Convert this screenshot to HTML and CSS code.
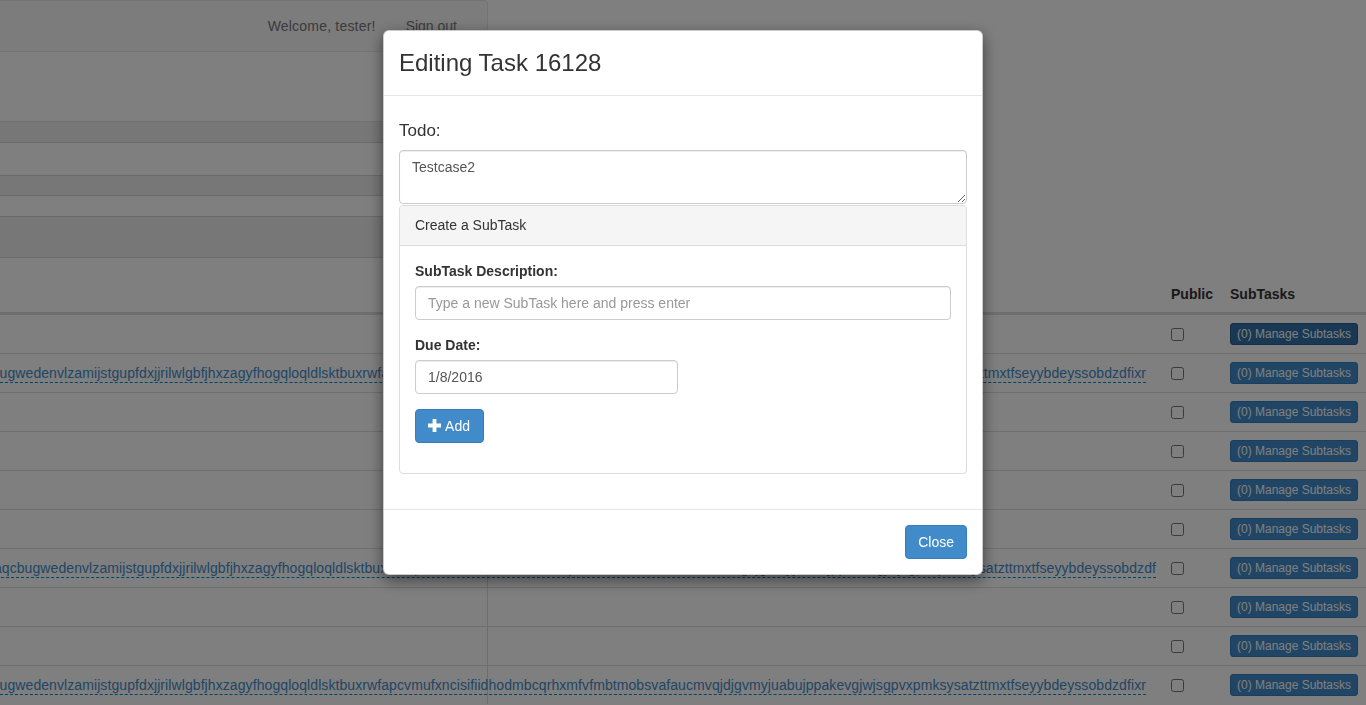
FILE: index.html
```html
<!DOCTYPE html>
<html lang="en">
<head>
<meta charset="utf-8">
<title>Editing Task 16128</title>
<link rel="stylesheet" href="styles.css">
</head>
<body>
<div class="page">
  <div class="top">
    <nav class="navbar">
      <span class="navbar-text">Welcome, tester!</span>
      <a class="navbar-link" href="#">Sign out</a>
    </nav>
    <div class="side-list">
      <div class="side-spacer"></div>
      <div class="side-row shade light-top h20"></div>
      <div class="side-row h32"></div>
      <div class="side-row shade h19"></div>
      <div class="side-row h20"></div>
      <div class="side-row shade h40"></div>
      <div class="side-row h18"></div>
    </div>
  </div>

  <div class="task-table">
    <div class="thead">
      <div class="th"></div>
      <div class="th">Public</div>
      <div class="th">SubTasks</div>
    </div>
    <div class="task-row">
      <div class="todo-cell"></div>
      <div class="check-cell"><input type="checkbox"></div>
      <div class="btn-cell"><button class="btn-xs btn-xs-active">(0) Manage Subtasks</button></div>
    </div>
    <div class="task-row">
      <div class="todo-cell"><a class="editable" href="#">xqcbugwedenvlzamijstgupfdxjjrilwlgbfjhxzagyfhogqloqldlsktbuxrwfapcvmufxncisifiidhodmbcqrhxmfvfmbtmobsvafaucmvqjdjgvmyjuabujppakevgjwjsgpvxpmksysatzttmxtfseyybdeyssobdzdfixr</a></div>
      <div class="check-cell"><input type="checkbox"></div>
      <div class="btn-cell"><button class="btn-xs">(0) Manage Subtasks</button></div>
    </div>
    <div class="task-row">
      <div class="todo-cell"></div>
      <div class="check-cell"><input type="checkbox"></div>
      <div class="btn-cell"><button class="btn-xs">(0) Manage Subtasks</button></div>
    </div>
    <div class="task-row">
      <div class="todo-cell"></div>
      <div class="check-cell"><input type="checkbox"></div>
      <div class="btn-cell"><button class="btn-xs">(0) Manage Subtasks</button></div>
    </div>
    <div class="task-row">
      <div class="todo-cell"></div>
      <div class="check-cell"><input type="checkbox"></div>
      <div class="btn-cell"><button class="btn-xs">(0) Manage Subtasks</button></div>
    </div>
    <div class="task-row">
      <div class="todo-cell"></div>
      <div class="check-cell"><input type="checkbox"></div>
      <div class="btn-cell"><button class="btn-xs">(0) Manage Subtasks</button></div>
    </div>
    <div class="task-row">
      <div class="todo-cell todo-cell-wide"><a class="editable" href="#">xvtaqcbugwedenvlzamijstgupfdxjjrilwlgbfjhxzagyfhogqloqldlsktbuxrwfapcvmufxncisifiidhodmbcqrhxmfvfmbtmobsvafaucmvqjdjgvmyjuabujppakevgjwjsgpvxpmksysatzttmxtfseyybdeyssobdzdf</a></div>
      <div class="check-cell"><input type="checkbox"></div>
      <div class="btn-cell"><button class="btn-xs">(0) Manage Subtasks</button></div>
    </div>
    <div class="task-row">
      <div class="todo-cell"></div>
      <div class="check-cell"><input type="checkbox"></div>
      <div class="btn-cell"><button class="btn-xs">(0) Manage Subtasks</button></div>
    </div>
    <div class="task-row">
      <div class="todo-cell"></div>
      <div class="check-cell"><input type="checkbox"></div>
      <div class="btn-cell"><button class="btn-xs">(0) Manage Subtasks</button></div>
    </div>
    <div class="task-row">
      <div class="todo-cell"><a class="editable" href="#">xqcbugwedenvlzamijstgupfdxjjrilwlgbfjhxzagyfhogqloqldlsktbuxrwfapcvmufxncisifiidhodmbcqrhxmfvfmbtmobsvafaucmvqjdjgvmyjuabujppakevgjwjsgpvxpmksysatzttmxtfseyybdeyssobdzdfixr</a></div>
      <div class="check-cell"><input type="checkbox"></div>
      <div class="btn-cell"><button class="btn-xs">(0) Manage Subtasks</button></div>
    </div>
  </div>
</div>

<div class="modal-backdrop"></div>

<div class="modal">
  <div class="modal-dialog">
    <div class="modal-content">
      <div class="modal-header">
        <h3 class="modal-title">Editing Task 16128</h3>
      </div>
      <div class="modal-body">
        <label class="todo-label">Todo:</label>
        <textarea class="form-control todo-input" rows="2">Testcase2</textarea>
        <div class="panel">
          <div class="panel-heading">Create a SubTask</div>
          <div class="panel-body">
            <div class="form-group">
              <label class="control-label">SubTask Description:</label>
              <input class="form-control" type="text" placeholder="Type a new SubTask here and press enter">
            </div>
            <div class="form-group">
              <label class="control-label">Due Date:</label>
              <input class="form-control date-input" type="text" value="1/8/2016">
            </div>
            <div class="form-group">
              <button class="btn btn-primary btn-add"><svg class="plus-icon" width="13" height="13" viewBox="0 0 13 13" aria-hidden="true"><path d="M4.6 0h3.8v4.6H13v3.8H8.4V13H4.6V8.4H0V4.6h4.6z" fill="#fff"/></svg> Add</button>
            </div>
          </div>
        </div>
      </div>
      <div class="modal-footer">
        <button class="btn btn-primary">Close</button>
      </div>
    </div>
  </div>
</div>
</body>
</html>
```

FILE: styles.css
```css
* {
  box-sizing: border-box;
}

html, body {
  margin: 0;
  padding: 0;
  overflow: hidden;
  height: 100%;
}

body {
  font-family: "Liberation Sans", Arial, Helvetica, sans-serif;
  font-size: 14px;
  line-height: 1.428571;
  color: #333;
  background: #fff;
}

a {
  color: #428bca;
  text-decoration: none;
}

/* ---------- background page ---------- */

.top {
  width: 488px;
}

.navbar {
  height: 52px;
  display: flex;
  justify-content: flex-end;
  align-items: center;
  padding-top: 1px;
  background: #f8f8f8;
  border: 1px solid #e7e7e7;
  border-left: 0;
  border-radius: 0 4px 4px 0;
  padding-right: 15px;
}

.navbar-text {
  color: #777;
  margin-right: 15px;
  letter-spacing: 0.2px;
}

.navbar-link {
  color: #777;
  padding: 0 15px;
}

.side-spacer {
  height: 69px;
}

.side-row {
  border-top: 1px solid #d4d4d4;
}

.side-row.light-top {
  border-top-color: #e4e4e4;
}

.shade {
  background: #eee;
}

.h18 { height: 19px; }
.h19 { height: 20px; }
.h20 { height: 21px; }
.h32 { height: 33px; }
.h40 { height: 41px; }

.task-table {
  width: 100%;
}

.thead {
  display: grid;
  grid-template-columns: minmax(0, 1fr) 59px 144px;
  height: 38px;
  border-bottom: 2px solid #ddd;
}

.th {
  padding: 8px;
  font-weight: bold;
  line-height: 20px;
  white-space: nowrap;
}

.task-row {
  display: grid;
  grid-template-columns: minmax(0, 1fr) 59px 144px;
  height: 39px;
  border-top: 1px solid #ddd;
  background-image: linear-gradient(#ddd, #ddd);
  background-repeat: no-repeat;
  background-size: 1px 100%;
  background-position: 487px 0;
}

.todo-cell {
  display: flex;
  justify-content: flex-end;
  align-items: center;
  overflow: hidden;
  white-space: nowrap;
  padding: 0 17px 0 0;
}

.todo-cell-wide {
  padding-right: 7px;
}

.editable {
  flex-shrink: 0;
  line-height: 18px;
  letter-spacing: 0.085px;
  color: #428bca;
  border-bottom: 1px dashed #0088cc;
}

.check-cell {
  padding: 0 8px;
  display: flex;
  align-items: center;
}

.check-cell input {
  margin: 0;
  width: 13px;
  height: 13px;
}

.btn-cell {
  padding: 8px;
}

.btn-xs {
  display: block;
  width: 128px;
  height: 22px;
  padding: 1px 5px;
  font-family: "Liberation Sans", Arial, sans-serif;
  font-size: 12px;
  line-height: 18px;
  color: #fff;
  background: #428bca;
  border: 1px solid #357ebd;
  border-radius: 3px;
  white-space: nowrap;
}

.btn-xs-active {
  background: #3071a9;
  border-color: #285e8e;
}

/* ---------- modal ---------- */

.modal-backdrop {
  position: fixed;
  inset: 0;
  background: rgba(0, 0, 0, 0.5);
  z-index: 1040;
}

.modal {
  position: fixed;
  inset: 0;
  z-index: 1050;
  overflow: hidden;
}

.modal-dialog {
  width: 600px;
  margin: 30px auto;
}

.modal-content {
  background: #fff;
  border: 1px solid rgba(0, 0, 0, 0.2);
  border-radius: 6px;
  box-shadow: 0 5px 15px rgba(0, 0, 0, 0.5);
}

.modal-header {
  padding: 15px;
  border-bottom: 1px solid #e5e5e5;
}

.modal-title {
  margin: 0;
  font-size: 24px;
  font-weight: 500;
  line-height: 34px;
  color: #333;
}

.modal-body {
  padding: 15px;
}

.todo-label {
  display: block;
  margin: 10px 0 9px;
  font-size: 17px;
  line-height: 20px;
}

.form-control {
  display: block;
  width: 100%;
  height: 34px;
  padding: 6px 12px;
  font-family: "Liberation Sans", Arial, sans-serif;
  font-size: 14px;
  line-height: 20px;
  color: #555;
  background: #fff;
  border: 1px solid #ccc;
  border-radius: 4px;
  box-shadow: inset 0 1px 1px rgba(0, 0, 0, 0.075);
  outline: none;
}

.form-control::placeholder {
  color: #999;
}

.todo-input {
  height: 54px;
  resize: vertical;
}

.date-input {
  width: 263px;
}

.panel {
  margin-top: 1px;
  margin-bottom: 20px;
  border: 1px solid #ddd;
  border-radius: 4px;
  background: #fff;
}

.panel-heading {
  padding: 10px 15px;
  line-height: 19px;
  background: #f5f5f5;
  border-bottom: 1px solid #ddd;
  border-radius: 3px 3px 0 0;
  color: #333;
}

.panel-body {
  padding: 15px;
}

.form-group {
  margin-bottom: 15px;
}

.control-label {
  display: block;
  margin-bottom: 5px;
  font-weight: bold;
  line-height: 20px;
}

.btn {
  display: inline-block;
  height: 34px;
  padding: 6px 12px;
  font-family: "Liberation Sans", Arial, sans-serif;
  font-size: 14px;
  line-height: 20px;
  border: 1px solid transparent;
  border-radius: 4px;
  cursor: pointer;
}

.btn-primary {
  color: #fff;
  background: #428bca;
  border-color: #357ebd;
}

.btn-add {
  padding-right: 13px;
}

.plus-icon {
  vertical-align: -1px;
  margin-right: 1px;
}

.modal-footer {
  padding: 15px;
  text-align: right;
  border-top: 1px solid #e5e5e5;
}
```
